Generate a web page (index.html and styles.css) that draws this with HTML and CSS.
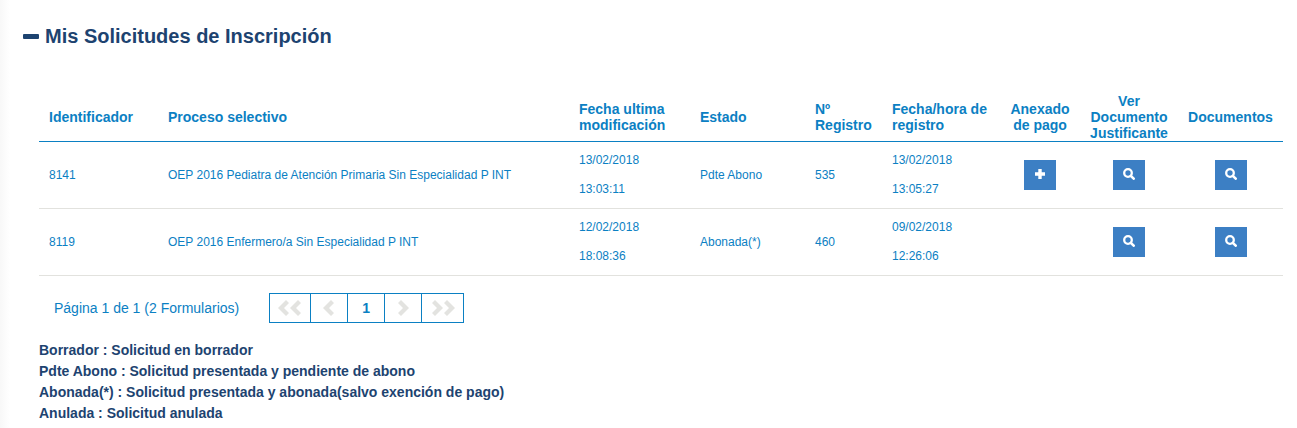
FILE: index.html
```html
<!DOCTYPE html>
<html lang="es">
<head>
    <meta charset="UTF-8">
    <meta name="viewport" content="width=device-width, initial-scale=1.0">
    <title>Mis Solicitudes de Inscripción</title>
    <link rel="stylesheet" href="styles.css">
</head>
<body>
    <!-- Iconos reutilizables -->
    <svg class="sprite" aria-hidden="true">
        <symbol id="lupa" viewBox="0 0 12 12">
            <circle cx="5" cy="5" r="3.8" fill="none" stroke="currentColor" stroke-width="2.3"/>
            <path d="M7.8 7.8 L10.7 10.7" fill="none" stroke="currentColor" stroke-width="2.6" stroke-linecap="round"/>
        </symbol>
        <symbol id="mas" viewBox="0 0 12 12">
            <path d="M6 1v10M1 6h10" fill="none" stroke="currentColor" stroke-width="3.4"/>
        </symbol>
        <symbol id="izquierda" viewBox="0 0 12 16">
            <path d="M8 0 L11 3 L6 8 L11 13 L8 16 L0 8 Z" fill="currentColor"/>
        </symbol>
        <symbol id="derecha" viewBox="0 0 12 16">
            <path d="M4 0 L1 3 L6 8 L1 13 L4 16 L12 8 Z" fill="currentColor"/>
        </symbol>
    </svg>

    <main class="panel">
        <h1 class="titulo"><span class="guion"></span>Mis Solicitudes de Inscripción</h1>

        <div class="contenido">
            <table class="tabla">
                <thead>
                    <tr>
                        <th class="col-id">Identificador</th>
                        <th>Proceso selectivo</th>
                        <th class="col-fecha">Fecha ultima modificación</th>
                        <th class="col-estado">Estado</th>
                        <th class="col-numero">Nº Registro</th>
                        <th class="col-registro">Fecha/hora de registro</th>
                        <th class="col-pago centro">Anexado de pago</th>
                        <th class="col-ver centro">Ver Documento Justificante</th>
                        <th class="col-docs centro">Documentos</th>
                    </tr>
                </thead>
                <tbody>
                    <tr>
                        <td>8141</td>
                        <td>OEP 2016 Pediatra de Atención Primaria Sin Especialidad P INT</td>
                        <td>13/02/2018<br>13:03:11</td>
                        <td>Pdte Abono</td>
                        <td>535</td>
                        <td>13/02/2018<br>13:05:27</td>
                        <td class="centro"><button class="boton" type="button" aria-label="Anexar pago"><svg><use href="#mas"/></svg></button></td>
                        <td class="centro"><button class="boton" type="button" aria-label="Ver justificante"><svg><use href="#lupa"/></svg></button></td>
                        <td class="centro"><button class="boton" type="button" aria-label="Ver documentos"><svg><use href="#lupa"/></svg></button></td>
                    </tr>
                    <tr>
                        <td>8119</td>
                        <td>OEP 2016 Enfermero/a Sin Especialidad P INT</td>
                        <td>12/02/2018<br>18:08:36</td>
                        <td>Abonada(*)</td>
                        <td>460</td>
                        <td>09/02/2018<br>12:26:06</td>
                        <td></td>
                        <td class="centro"><button class="boton" type="button" aria-label="Ver justificante"><svg><use href="#lupa"/></svg></button></td>
                        <td class="centro"><button class="boton" type="button" aria-label="Ver documentos"><svg><use href="#lupa"/></svg></button></td>
                    </tr>
                </tbody>
            </table>

            <!-- Paginación -->
            <div class="paginacion">
                <span>Página 1 de 1 (2 Formularios)</span>
                <nav class="paginas" aria-label="Paginación">
                    <button class="pagina doble" type="button" aria-label="Primera" disabled><svg><use href="#izquierda"/></svg><svg><use href="#izquierda"/></svg></button>
                    <button class="pagina" type="button" aria-label="Anterior" disabled><svg><use href="#izquierda"/></svg></button>
                    <button class="pagina actual" type="button">1</button>
                    <button class="pagina" type="button" aria-label="Siguiente" disabled><svg><use href="#derecha"/></svg></button>
                    <button class="pagina doble" type="button" aria-label="Última" disabled><svg><use href="#derecha"/></svg><svg><use href="#derecha"/></svg></button>
                </nav>
            </div>

            <!-- Leyenda de estados -->
            <ul class="leyenda">
                <li>Borrador : Solicitud en borrador</li>
                <li>Pdte Abono : Solicitud presentada y pendiente de abono</li>
                <li>Abonada(*) : Solicitud presentada y abonada(salvo exención de pago)</li>
                <li>Anulada : Solicitud anulada</li>
            </ul>
        </div>
    </main>
</body>
</html>
```
FILE: styles.css
```css
body {
    margin: 0;
    font-family: "Liberation Sans", Arial, sans-serif;
    font-size: 12px;
    color: #0b80c3;
    background-color: #fff;
}

.sprite {
    display: none;
}

.panel {
    padding: 24px 14px 4px 23px;
    background: linear-gradient(to right, #f8f8f8, #fff 10px);
}

.titulo {
    display: flex;
    align-items: center;
    gap: 6px;
    margin: 0 0 45px;
    font-size: 20px;
    line-height: 24px;
    color: #1d4370;
}

.guion {
    width: 16px;
    height: 5px;
    border-radius: 1px;
    background-color: #1d4370;
}

.contenido {
    padding-left: 16px;
}

/* Tabla de solicitudes */
.tabla {
    width: 100%;
    table-layout: fixed;
    border-collapse: separate;
    border-spacing: 0;
}

.tabla th {
    padding: 0 10px;
    font-size: 14px;
    line-height: 16px;
    text-align: left;
    border-bottom: 1px solid #0b80c3;
}

.tabla td {
    padding: 4px 10px;
    line-height: 29px;
    border-bottom: 1px solid #e2e2de;
}

.tabla .centro {
    padding-left: 8px;
    padding-right: 8px;
    text-align: center;
}

.col-id { width: 99px; }
.col-fecha { width: 101px; }
.col-estado { width: 95px; }
.col-numero { width: 57px; }
.col-registro { width: 98px; }
.col-pago { width: 64px; }
.col-ver { width: 82px; }
.col-docs { width: 89px; }

.boton {
    display: inline-flex;
    align-items: center;
    justify-content: center;
    width: 32px;
    height: 30px;
    padding: 0 0 2px;
    border: none;
    color: #fff;
    background-color: #3c7fc4;
    vertical-align: middle;
    cursor: pointer;
}

.boton svg {
    width: 12px;
    height: 12px;
}

/* Paginación */
.paginacion {
    display: flex;
    align-items: center;
    gap: 30px;
    padding: 17px 15px;
    font-size: 14px;
}

.paginas {
    display: flex;
    border: 1px solid #0b80c3;
}

.pagina {
    display: flex;
    align-items: center;
    justify-content: center;
    box-sizing: border-box;
    width: 37px;
    height: 28px;
    padding: 0;
    border: none;
    border-right: 1px solid #0b80c3;
    font: bold 14px "Liberation Sans", Arial, sans-serif;
    color: #e3e3e0;
    background-color: #fff;
}

.pagina:last-child {
    border-right: none;
}

.pagina.doble {
    width: 41px;
}

.pagina.actual {
    color: #0b80c3;
}

.pagina svg {
    width: 12px;
    height: 16px;
}

/* Leyenda */
.leyenda {
    margin: 0;
    padding: 0;
    list-style: none;
    font-size: 14px;
    font-weight: bold;
    line-height: 21px;
    color: #1d4370;
}
```
